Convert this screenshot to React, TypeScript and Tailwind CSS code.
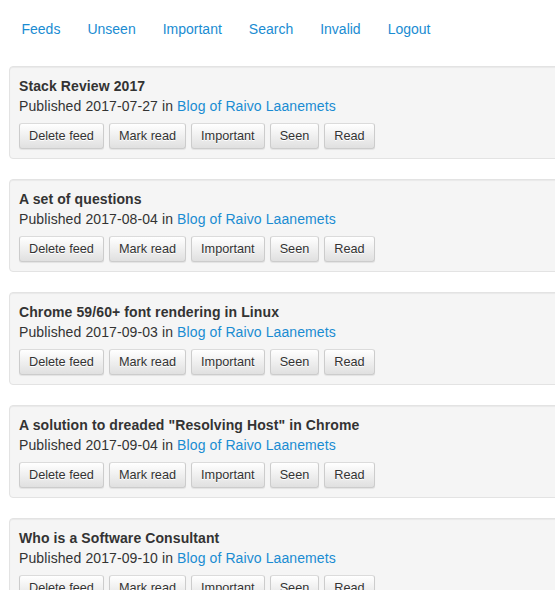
const nav = ['Feeds', 'Unseen', 'Important', 'Search', 'Invalid', 'Logout'];

const articles = [
  { title: 'Stack Review 2017', date: '2017-07-27' },
  { title: 'A set of questions', date: '2017-08-04' },
  { title: 'Chrome 59/60+ font rendering in Linux', date: '2017-09-03' },
  { title: 'A solution to dreaded "Resolving Host" in Chrome', date: '2017-09-04' },
  { title: 'Who is a Software Consultant', date: '2017-09-10' },
];

const actions = ['Delete feed', 'Mark read', 'Important', 'Seen', 'Read'];

const Btn = ({ children }: { children: string }) => (
  <button className="h-[26px] px-[9px] text-[12.7px] tracking-normal leading-none text-[#333] rounded-[3px] border border-[#ccc] border-t-[#dbdbdb] bg-gradient-to-b from-white to-[#e0e0e0] shadow-[0_1px_1px_rgba(0,0,0,0.075)] [text-shadow:0_1px_0_#fff]">
    {children}
  </button>
);

export default function App() {
  return (
    <div className="w-screen min-h-screen overflow-x-hidden bg-white font-['Liberation_Sans',Arial,sans-serif] text-sm text-[#333]">
      <nav className="flex pl-[8px] h-[58px] items-center">
        {nav.map((item) => (
          <a key={item} href="#" className="px-[13.5px] text-[14px] text-[#1a8cd2] leading-5">
            {item}
          </a>
        ))}
      </nav>

      <div className="pl-[9px] pt-[8px] flex flex-col gap-5 w-[600px] tracking-[0.1px]">
        {articles.map((a) => (
          <div
            key={a.title}
            className="border border-[#e3e3e3] rounded bg-[#f5f5f5] shadow-[inset_0_1px_1px_rgba(0,0,0,0.05)] px-[9px] pt-[9px] pb-[9px]"
          >
            <div className="font-bold leading-5">{a.title}</div>
            <div className="leading-5">
              Published {a.date} in{' '}
              <a href="#" className="text-[#1a8cd2]">Blog of Raivo Laanemets</a>
            </div>
            <div className="flex gap-[5px] mt-[7px]">
              {actions.map((b) => (
                <Btn key={b}>{b}</Btn>
              ))}
            </div>
          </div>
        ))}
      </div>
    </div>
  );
}
